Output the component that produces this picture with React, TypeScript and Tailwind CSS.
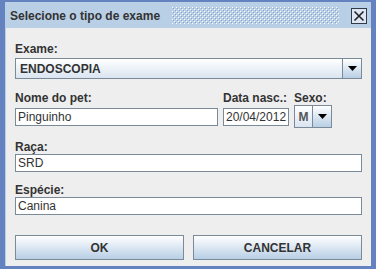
import React from 'react';

const font = { fontFamily: '"Liberation Sans", Arial, sans-serif' };

const Bumps: React.FC = () => (
  <svg className="h-[17px] flex-1" preserveAspectRatio="none">
    <defs>
      <pattern id="bumps" width="4" height="4" patternUnits="userSpaceOnUse">
        <rect x="0" y="0" width="1" height="1" fill="#ffffff" />
        <rect x="1" y="1" width="1" height="1" fill="#8aa5d2" />
        <rect x="2" y="2" width="1" height="1" fill="#ffffff" />
        <rect x="3" y="3" width="1" height="1" fill="#8aa5d2" />
      </pattern>
    </defs>
    <rect width="100%" height="100%" fill="url(#bumps)" />
  </svg>
);

const Arrow: React.FC = () => (
  <svg width="9" height="5" viewBox="0 0 9 5">
    <path d="M0 0h9L4.5 5z" fill="#000" />
  </svg>
);

const Label: React.FC<{ children: React.ReactNode; className?: string }> = ({ children, className }) => (
  <div className={`h-[13px] text-[12px] leading-[13px] font-bold text-[#333333] ${className ?? ''}`}>{children}</div>
);

const Field: React.FC<{ value: string; className?: string }> = ({ value, className }) => (
  <div
    className={`h-[18px] bg-white border border-[#7a8a99] px-[2px] text-[12px] leading-[16px] text-[#333333] ${className ?? ''}`}
  >
    {value}
  </div>
);

const Button: React.FC<{ label: string }> = ({ label }) => (
  <div className="flex-1 h-[25px] border border-[#7a8a99] bg-gradient-to-b from-white to-[#b8cfe5] flex items-center justify-center text-[12px] font-bold text-[#333333]">
    {label}
  </div>
);

export default function App() {
  return (
    <div className="w-[380px] h-[270px] bg-white" style={font}>
      <div className="w-[376px] h-[269px] bg-[#6382bf] pt-[2px] pl-[5px] pr-[5px] pb-[3px] flex flex-col">
        <div className="flex-1 flex flex-col border-t border-l border-[#b8cfe5]">
          {/* title bar */}
          <div className="h-[25px] bg-[#b8cfe5] flex items-center pl-[4px] pr-[4px] gap-[12px]">
            <span className="text-[12px] font-bold text-[#333333] whitespace-nowrap">Selecione o tipo de exame</span>
            <Bumps />
            <div className="w-[16px] h-[16px] border border-[#333a4a] bg-[#dde6f2] flex items-center justify-center">
              <svg width="12" height="12" viewBox="0 0 12 12">
                <path d="M1.5 1.5l9 9M10.5 1.5l-9 9" stroke="#222" strokeWidth="1.6" />
              </svg>
            </div>
          </div>

          {/* content */}
          <div className="flex-1 bg-[#eeeeee] px-[9px] pt-[15px]">
            <Label>Exame:</Label>
            <div className="mt-[2px] h-[21px] flex border border-[#7a8a99] bg-gradient-to-b from-white to-[#dae5f1]">
              <div className="flex-1 flex items-center pl-[4px] text-[12px] font-bold text-[#333333] border-r border-[#7a8a99]">
                ENDOSCOPIA
              </div>
              <div className="w-[18px] flex items-center justify-center bg-gradient-to-b from-white to-[#b8cfe5]">
                <Arrow />
              </div>
            </div>

            <div className="mt-[13px] grid grid-cols-[203px_66px_38px] gap-x-[5px]">
              <Label>Nome do pet:</Label>
              <Label>Data nasc.:</Label>
              <Label>Sexo:</Label>
              <div className="h-[23px] flex items-center">
                <Field value="Pinguinho" className="w-full" />
              </div>
              <div className="h-[23px] flex items-center">
                <Field value="20/04/2012" className="w-full" />
              </div>
              <div className="h-[23px] flex border border-[#7a8a99] bg-gradient-to-b from-white to-[#dae5f1]">
                <div className="w-[18px] flex items-center justify-center text-[12px] font-bold text-[#555555] border-r border-[#7a8a99]">
                  M
                </div>
                <div className="flex-1 flex items-center justify-center bg-gradient-to-b from-white to-[#b8cfe5]">
                  <Arrow />
                </div>
              </div>
            </div>

            <Label className="mt-[13px]">Raça:</Label>
            <Field value="SRD" />

            <Label className="mt-[12px]">Espécie:</Label>
            <Field value="Canina" />

            <div className="mt-[20px] flex gap-[9px]">
              <Button label="OK" />
              <Button label="CANCELAR" />
            </div>
          </div>
        </div>
      </div>
    </div>
  );
}
